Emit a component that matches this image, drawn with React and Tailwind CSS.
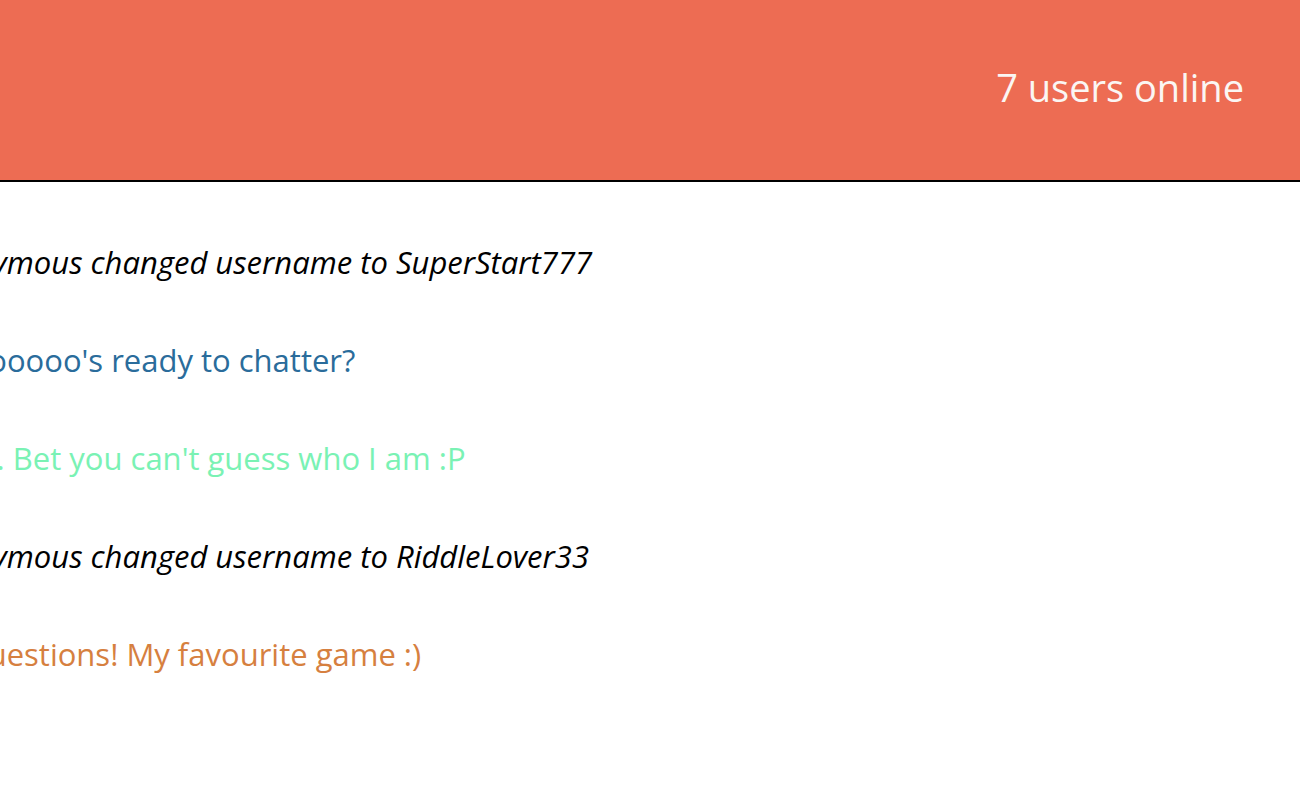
import React from 'react'

const messages = [
  { text: 'Anonymous changed username to SuperStart777', cls: 'italic text-black' },
  { text: 'Whoooooo\'s ready to chatter?', cls: 'text-[#2a6c9b]' },
  { text: 'Hello. Bet you can\'t guess who I am :P', cls: 'text-[#7af2b4]' },
  { text: 'Anonymous changed username to RiddleLover33', cls: 'italic text-black' },
  { text: 'Ah questions! My favourite game :)', cls: 'text-[#d6803f]' },
]

const App = () => {
  return (
    <div className="w-[1300px] h-[789px] overflow-hidden bg-white font-['Open_Sans',sans-serif]">
      <header className="h-[182px] bg-[#ed6c53] border-b-2 border-black flex items-center justify-end pr-[56px] pb-[6px]">
        <span className="text-[#fbf6f3] text-[38px]">7 users online</span>
      </header>
      <ul className="ml-[-78px] pt-[59px] flex flex-col gap-[56px]">
        {messages.map((m, i) => (
          <li key={i} className={`text-[31px] leading-[42px] whitespace-nowrap ${m.cls}`}>
            {m.text}
          </li>
        ))}
      </ul>
    </div>
  )
}

export default App
